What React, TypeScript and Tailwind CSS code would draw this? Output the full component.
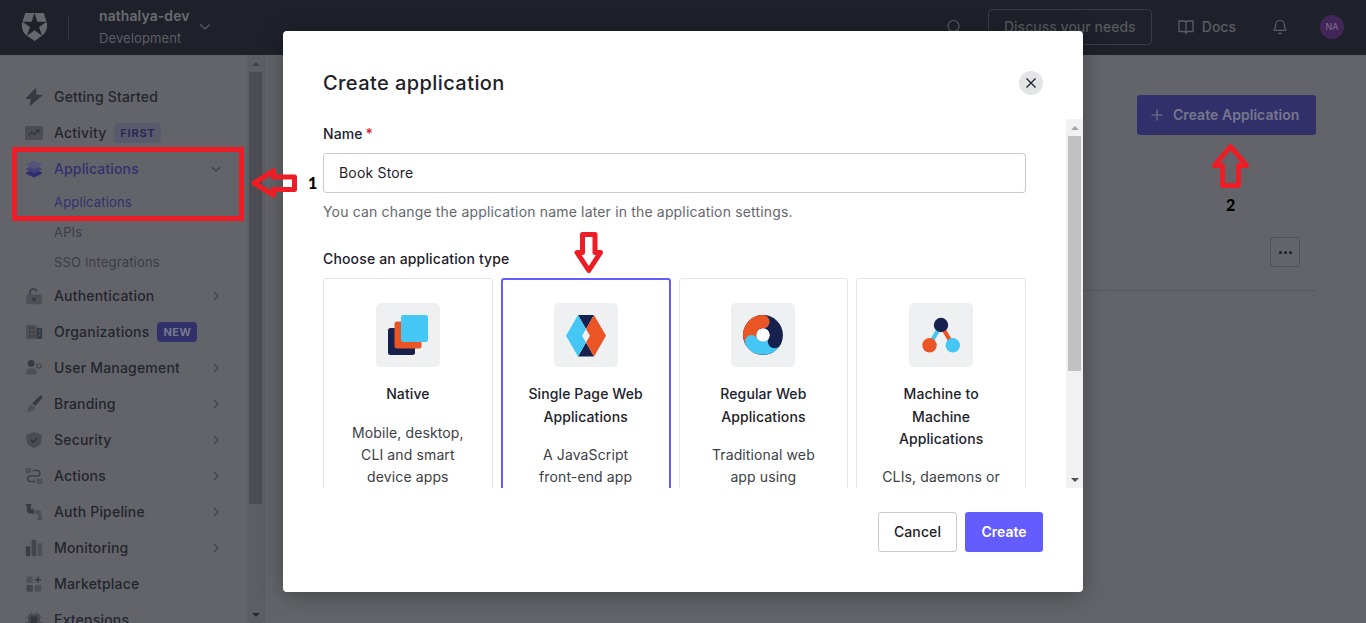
import React from "react";

const ICON_DARK = "#3f414c";
const ICON_LIGHT = "#4f5056";

const Svg = ({ children, size = 18 }: { children: React.ReactNode; size?: number }) => (
  <svg width={size} height={size} viewBox="0 0 18 18" fill="none">
    {children}
  </svg>
);

const icons: Record<string, React.ReactNode> = {
  bolt: (
    <Svg>
      <path d="M10.6.8 1.4 10.4h5l-.9 6.400L16.600 7.400h-5.700Z" fill="#373a45" stroke="#373a45" strokeWidth="1.200" strokeLinejoin="round" />
    </Svg>
  ),
  activity: (
    <Svg>
      <rect x="0" y="2" width="18" height="14" rx="1.4" fill="#4c4d53" />
      <path d="m3.6 11.3 3-3 2.6 2.2 4.3-4.2M10.6 6h3.3v3.2" stroke="#34363e" strokeWidth="1.3" />
    </Svg>
  ),
  layers: (
    <Svg>
      <path d="m9 9 8 3.500v1.200L9 17.400 1 13.700v-1.200Z" fill="#2f2b72" />
      <path d="m9 5 7.600 3.400v1.200L9 13.200 1.400 9.600V8.400Z" fill="#434178" />
      <path d="m9 .7 7.600 3.500v1.200L9 9 1.400 5.400V4.200Z" fill="#54547a" />
    </Svg>
  ),
  lock: (
    <Svg>
      <path d="M4.900 8.600V5.200A3.600 3.600 0 0 1 11.800 4.300" stroke={ICON_DARK} strokeWidth="2" />
      <rect x="1.2" y="7.6" width="15.6" height="9.6" rx="1.5" fill={ICON_LIGHT} />
      <circle cx="9" cy="12.5" r="2" fill="#393b43" />
    </Svg>
  ),
  building: (
    <Svg>
      <rect x="1" y="2" width="11" height="14" rx="1.2" fill={ICON_LIGHT} />
      <rect x="11.6" y="4.8" width="5.6" height="11.2" rx="1.2" fill="#373b46" />
      <path d="M4 4h1.5v1.8H4zM7.8 4h1.5v1.8H7.8zM4 8h1.5v1.8H4zM7.8 8h1.5v1.8H7.8zM4 12h1.5v1.8H4zM7.8 12h1.5v1.8H7.8z" fill="#33363e" />
      <path d="M14 7.6h1.3v1.6H14zM14 11.4h1.3V13H14z" fill="#5a5b61" />
    </Svg>
  ),
  users: (
    <Svg>
      <circle cx="6.2" cy="4.4" r="3.4" fill="#373a45" />
      <path d="M1 15.4v-2.2c0-2.4 1.5-3.6 3.8-3.6h2.8c2.4 0 3.8 1.2 3.8 3.6v2.2Z" fill={ICON_LIGHT} />
      <circle cx="14" cy="7" r="2" stroke="#494a50" strokeWidth="1.2" />
      <path d="M14 3.8v1.3M14 8.9v1.3M11.2 5.4l1.1.6M15.7 8l1.1.6M11.2 8.6l1.1-.6M15.7 6l1.1-.6" stroke="#494a50" strokeWidth="1.2" />
    </Svg>
  ),
  brush: (
    <Svg>
      <path d="M16.7.7c1 .8.5 1.9 0 2.7L10.4 11 7.2 8.4l6.7-6.6c.8-.7 1.9-1.7 2.8-1.1Z" fill="#373a45" />
      <path d="M6.3 9.3 9.6 12c.3 3.2-2.4 5.2-8.6 4.8 2-1.2 1.7-2.7 2.4-4.6.6-1.7 1.5-2.6 2.9-2.9Z" fill={ICON_LIGHT} />
    </Svg>
  ),
  shield: (
    <Svg>
      <path d="M9 1 16.6 3.6v5.2c0 4-2.8 6.7-7.6 8.6-4.8-1.9-7.6-4.6-7.6-8.6V3.6Z" fill="#4b4c52" />
      <path d="m5.8 8.8 2.3 2.3 4.2-4.2" stroke="#32343d" strokeWidth="1.5" />
    </Svg>
  ),
  flow: (
    <Svg>
      <rect x=".6" y="1" width="5.6" height="5.2" rx=".8" fill={ICON_LIGHT} />
      <rect x="11.6" y="11.8" width="5.6" height="5.2" rx=".8" fill={ICON_LIGHT} />
      <path d="M7.8 3.4h4.4a2.8 2.8 0 0 1 0 5.6H5.4a2.7 2.7 0 0 0 0 5.4h4.8" stroke="#3d3f48" strokeWidth="1.5" />
    </Svg>
  ),
  pipe: (
    <Svg>
      <path d="M.6 1h5.8v1.3H5.6v3c0 .7.3 1 1 1h1v-.8h1.2v5.8H7.6v-.8H6c-2.800 0-4.200-1.400-4.200-4.200v-4H.6Z" fill="#373a45" />
      <path d="M9.6 6.9h3.2c2.6 0 3.8 1.4 3.8 4v4.6h.8V17h-5.6v-1.5h.9V12c0-.7-.3-1-1-1H9.6Z" fill={ICON_LIGHT} />
    </Svg>
  ),
  bars: (
    <Svg>
      <rect x=".8" y="7.2" width="4.4" height="10" rx="1.2" fill="#3b3e48" />
      <rect x="6.6" y=".8" width="4.8" height="16.4" rx="1.4" fill="#44464e" />
      <rect x="12.8" y="4" width="4.4" height="13.2" rx="1.2" fill={ICON_LIGHT} />
    </Svg>
  ),
  market: (
    <Svg>
      <rect x="1.4" y="1.6" width="6.4" height="6.4" rx="1.3" fill={ICON_LIGHT} />
      <rect x="1.4" y="10" width="6.4" height="6.8" rx="1.3" fill="#43454c" />
      <rect x="9.8" y="10" width="6.6" height="6.8" rx="1.3" fill={ICON_LIGHT} />
      <path d="M13 1.6v6.2M9.9 4.7h6.2" stroke="#353841" strokeWidth="1.4" />
    </Svg>
  ),
  chip: (
    <Svg>
      <path d="M6.500.5v17M11.500.5v17M.6 6.500h17M.6 11.500h17" stroke={ICON_LIGHT} strokeWidth="1.4" />
      <rect x="3" y="3" width="12" height="12" rx="1.6" fill="#4a4b51" />
      <rect x="5.6" y="5.6" width="6.8" height="6.8" rx=".6" fill="#33363f" />
    </Svg>
  ),
};

type Item = { label: string; icon: string; badge?: "FIRST" | "NEW"; arrow?: boolean };

const lower: Item[] = [
  { label: "Authentication", icon: "lock", arrow: true },
  { label: "Organizations", icon: "building", badge: "NEW" },
  { label: "User Management", icon: "users", arrow: true },
  { label: "Branding", icon: "brush", arrow: true },
  { label: "Security", icon: "shield", arrow: true },
  { label: "Actions", icon: "flow", arrow: true },
  { label: "Auth Pipeline", icon: "pipe", arrow: true },
  { label: "Monitoring", icon: "bars", arrow: true },
  { label: "Marketplace", icon: "market" },
  { label: "Extensions", icon: "chip" },
];

const Chevron = ({ down = false }: { down?: boolean }) => (
  <svg width="10" height="10" viewBox="0 0 10 10" fill="none" stroke="#3d3f46" strokeWidth="1.1" className="ml-auto">
    <path d={down ? "M1 3l4 4 4-4" : "M3 1l4 4-4 4"} />
  </svg>
);

const NavRow = ({ item }: { item: Item }) => (
  <div className="flex h-9 shrink-0 items-center pr-[26px] pl-[25px]">
    {icons[item.icon]}
    <span className="ml-[11px] text-sm font-medium tracking-[0.19px] text-[#23252e]">{item.label}</span>
    {item.badge === "FIRST" && (
      <span className="ml-[8px] flex h-5 w-[47px] items-center justify-center rounded bg-[#595a6c] text-[11px] font-semibold tracking-[0.8px] text-[#272551]">
        FIRST
      </span>
    )}
    {item.badge === "NEW" && (
      <span className="ml-[8px] flex h-5 w-10 items-center justify-center rounded bg-[#32306a] text-[11px] font-bold tracking-[0.5px] text-[#77788a]">
        NEW
      </span>
    )}
    {item.arrow && <Chevron />}
  </div>
);

const Header = () => (
  <header className="flex h-[55px] shrink-0 items-center bg-[#1e212a] pb-[2px] text-[#64666c]">
    <svg width="29" height="28" viewBox="0 0 24 24" preserveAspectRatio="none" className="ml-5 mt-px">
      <path
        fill="#66686e"
        d="M21.98 7.448L19.62 0H4.347L2.02 7.448c-1.352 4.312.03 9.206 3.815 12.015L12.007 24l6.157-4.552c3.755-2.81 5.182-7.688 3.815-12.015l-6.16 4.58 2.343 7.45-6.157-4.597-6.158 4.58 2.358-7.433-6.188-4.55 7.63-.045L12.008 0l2.356 7.404 7.615.044z"
      />
    </svg>
    <div className="ml-[19px] h-6 w-px bg-[#34373f]" />
    <div className="ml-[30px] flex w-[91px] flex-col text-sm leading-[22px]">
      <span className="font-semibold tracking-[0.08px] text-[#696b70]">nathalya-dev</span>
      <span className="text-[13px] tracking-[0.12px] text-[#5c5e64]">Development</span>
    </div>
    <svg width="12" height="8" viewBox="0 0 12 8" fill="none" stroke="#5c5e64" strokeWidth="1.2" className="ml-[9px]">
      <path d="m1.300 1.500 4.700 4.500 4.700-4.500" />
    </svg>
    <div className="ml-auto flex items-center pr-[22px]">
      <svg width="16" height="16" viewBox="0 0 16 16" fill="none" stroke="#5c5e64" strokeWidth="1.200">
        <circle cx="7.500" cy="7" r="5.500" />
        <path d="m11.500 11 3 3" />
      </svg>
      <div className="ml-[26px] flex h-9 w-[164px] items-center justify-center rounded border border-[#393c44] text-sm font-medium tracking-[0.02px] text-[#55575e]">
        Discuss your needs
      </div>
      <svg width="16" height="16" viewBox="0 0 16 16" fill="none" stroke="#5c5e64" strokeWidth="1.300" className="ml-[26px]">
        <path d="M8 3c-.6-.8-1.500-1-2.500-1H1v10.500h5c1 0 1.700.4 2 1.500.3-1.100 1-1.500 2-1.500h5V2h-4.500C9.500 2 8.600 2.200 8 3Zm0 0v10.500" />
      </svg>
      <span className="ml-[8px] text-sm font-medium text-[#5c5e64]">Docs</span>
      <svg width="16" height="18" viewBox="0 0 16 18" fill="none" stroke="#5c5e64" strokeWidth="1.200" className="ml-[36px]">
        <path d="M2 12.300c1.200-1.500 1.500-2.800 1.500-5.300a4.500 4.500 0 0 1 9 0c0 2.500.3 3.800 1.500 5.300ZM6.300 15.300h3.400" strokeLinejoin="round" />
      </svg>
      <div className="ml-[32px] flex h-6 w-6 items-center justify-center rounded-full bg-[#42265a] text-[9px] text-[#81728b]">NA</div>
    </div>
  </header>
);

const Sidebar = () => (
  <aside className="flex w-[265px] shrink-0 border-r border-[#5b5c61]">
    <nav className="flex h-[568px] w-[247px] flex-col overflow-hidden pt-6">
      <NavRow item={{ label: "Getting Started", icon: "bolt" }} />
      <NavRow item={{ label: "Activity", icon: "activity", badge: "FIRST" }} />
      <div className="flex h-9 shrink-0 items-center pr-[26px] pl-[25px]">
        {icons.layers}
        <span className="ml-[11px] text-sm font-medium tracking-[0.14px] text-[#33306f]">Applications</span>
        <Chevron down />
      </div>
      <div className="flex h-[91px] shrink-0 flex-col pt-[1px] pl-[54px] text-[13px] tracking-[0.17px] text-[#3b3d44]">
        <span className="flex h-[30px] items-center text-[#33306f]">Applications</span>
        <span className="flex h-[31px] items-center">APIs</span>
        <span className="flex h-[31px] items-center">SSO Integrations</span>
      </div>
      {lower.map((item) => (
        <NavRow key={item.label} item={item} />
      ))}
    </nav>
    <div className="flex w-[17px] flex-col items-center bg-[#5d5e63]">
      <div className="flex h-[17px] items-center">
        <svg width="8" height="4" viewBox="0 0 8 4"><path d="M0 4 4 0l4 4Z" fill="#414247" /></svg>
      </div>
      <div className="h-[432px] w-[13px] bg-[#4c4d52]" />
      <div className="mt-auto flex h-[17px] items-center">
        <svg width="8" height="4" viewBox="0 0 8 4"><path d="m0 0 4 4 4-4Z" fill="#26272c" /></svg>
      </div>
    </div>
  </aside>
);

const Content = () => (
  <main className="flex flex-1 flex-col pr-[50px] pl-[50px]">
    <div className="mt-10 flex h-10 w-[179px] items-center self-end rounded-[3px] bg-[#32306a] pl-[14px] text-[#76778c]">
      <svg width="12" height="12" viewBox="0 0 12 12" stroke="#76778c" strokeWidth="1.200"><path d="M6 .5v11M.5 6h11" /></svg>
      <span className="ml-[10px] text-sm font-semibold tracking-[0.04px]">Create Application</span>
    </div>
    <div className="mt-[86px] flex h-[70px] justify-end border-b border-[#57585e] pt-4 pr-4">
      <div className="flex h-[30px] w-[30px] items-center justify-center gap-[2px] rounded-[3px] border border-[#505157]">
        <i className="h-[3px] w-[3px] rounded-full bg-[#1f2129]" />
        <i className="h-[3px] w-[3px] rounded-full bg-[#1f2129]" />
        <i className="h-[3px] w-[3px] rounded-full bg-[#1f2129]" />
      </div>
    </div>
  </main>
);

const NAVY = "#16214d";
const ORANGE = "#eb5424";
const SKY = "#44c7f4";

const appTypes = [
  {
    title: ["Native"],
    text: ["Mobile, desktop,", "CLI and smart", "device apps"],
    art: (
      <>
        <rect x="12" y="25" width="27" height="27" rx="2.500" fill={NAVY} />
        <rect x="18.500" y="18.500" width="27" height="27" rx="2.500" fill={ORANGE} />
        <rect x="25" y="12" width="27" height="27" rx="2.500" fill={SKY} />
      </>
    ),
  },
  {
    title: ["Single Page Web", "Applications"],
    text: ["A JavaScript", "front-end app"],
    selected: true,
    art: (
      <>
        <path d="M24 12h16l-8 14ZM24 53.500h16l-8-14Z" fill={NAVY} />
        <path d="M24 12 12 32.700l12 20.800 8-14-4-6.800 4-6.700Z" fill={SKY} />
        <path d="m40 12 12 20.700-12 20.800-8-14 4-6.800-4-6.700Z" fill={ORANGE} />
      </>
    ),
  },
  {
    title: ["Regular Web", "Applications"],
    text: ["Traditional web", "app using"],
    art: (
      <>
        <circle cx="32" cy="32" r="13.300" fill="none" stroke={NAVY} strokeWidth="13.300" />
        <path d="M43.500 38.600A13.300 13.300 0 0 1 20.500 38.600" fill="none" stroke={SKY} strokeWidth="13.300" />
        <circle cx="43.500" cy="38.600" r="6.650" fill={NAVY} />
        <path d="M20.500 38.600A13.300 13.300 0 0 1 32 18.700" fill="none" stroke={ORANGE} strokeWidth="13.300" />
        <circle cx="32" cy="18.700" r="6.650" fill={ORANGE} />
        <circle cx="20.500" cy="38.600" r="6.650" fill={SKY} />
        <circle cx="32" cy="32" r="6.600" fill="#fff" />
      </>
    ),
  },
  {
    title: ["Machine to", "Machine", "Applications"],
    text: ["CLIs, daemons or"],
    art: (
      <>
        <path d="M32 22 20.500 42" stroke={SKY} strokeWidth="4.200" />
        <path d="M32 22 43.700 42" stroke={ORANGE} strokeWidth="4.200" />
        <circle cx="32" cy="22" r="7.200" fill={NAVY} />
        <circle cx="20.500" cy="42.300" r="7.200" fill={ORANGE} />
        <circle cx="43.800" cy="42.300" r="7.200" fill={SKY} />
      </>
    ),
  },
];

const Modal = () => (
  <section className="absolute top-[31px] left-[283px] flex h-[561px] w-[800px] flex-col rounded-[4px] bg-white text-[#1e212a] shadow-[0_4px_22px_rgba(0,0,0,0.3)]">
    <div className="flex h-[88px] shrink-0 items-center justify-between px-10 pt-4">
      <h1 className="text-xl font-medium tracking-[0.42px]">Create application</h1>
      <div className="flex h-6 w-6 items-center justify-center rounded-full bg-[#e3e4e6]">
        <svg width="12" height="12" viewBox="0 0 12 12" stroke="#1e212a" strokeWidth="1.300"><path d="m1.500 1.500 9 9M10.500 1.500l-9 9" /></svg>
      </div>
    </div>
    <div className="flex h-[369px] shrink-0 overflow-hidden">
      <div className="flex w-[783px] flex-col pl-10 pr-10">
        <div className="mt-1 text-sm leading-[22px] font-medium tracking-[0.1px]">
          Name <span className="-ml-px text-[#d0202c]">*</span>
        </div>
        <div className="mt-2 flex h-10 w-[703px] shrink-0 items-center rounded-[3px] border border-[#c9cace] px-[15px] text-sm tracking-[0.18px]">Book Store</div>
        <p className="mt-2 text-sm leading-[22px] tracking-[0.165px] text-[#65676e]">You can change the application name later in the application settings.</p>
        <div className="mt-[25px] text-sm leading-[22px] font-medium tracking-[0.15px]">Choose an application type</div>
        <div className="mt-2 grid w-[703px] shrink-0 grid-cols-4 gap-2">
          {appTypes.map((t) => (
            <div
              key={t.title.join(" ")}
              className={
                t.selected
                  ? "flex h-[260px] flex-col items-center rounded-[3px] border-2 border-[#635dff] pt-[23px]"
                  : "flex h-[260px] flex-col items-center rounded-[3px] border border-[#e3e4e6] pt-6"
              }
            >
              <svg width="64" height="64" viewBox="0 0 64 64" className="shrink-0 rounded-[5px] bg-[#eff0f2]">{t.art}</svg>
              <div className="mt-[16.200px] text-center text-sm leading-[22.400px] font-medium tracking-[0.1px]">
                {t.title.map((l) => <div key={l}>{l}</div>)}
              </div>
              <div className="mt-4 text-center text-sm leading-[22px] tracking-[0.12px] text-[#3c3e46]">
                {t.text.map((l) => <div key={l}>{l}</div>)}
              </div>
            </div>
          ))}
        </div>
      </div>
      <div className="flex h-[369px] w-[17px] flex-col items-center bg-[#f1f1f1]">
        <div className="flex h-[17px] items-center">
          <svg width="8" height="4" viewBox="0 0 8 4"><path d="M0 4 4 0l4 4Z" fill="#a3a3a3" /></svg>
        </div>
        <div className="h-[235px] w-[13px] bg-[#c1c1c1]" />
        <div className="mt-auto flex h-[17px] items-center">
          <svg width="8" height="4" viewBox="0 0 8 4"><path d="m0 0 4 4 4-4Z" fill="#505050" /></svg>
        </div>
      </div>
    </div>
    <div className="flex justify-end gap-2 pt-6 pr-10 text-sm">
      <button className="h-10 w-[79px] rounded-[3px] border border-[#c9cace] font-medium tracking-[0.1px]">Cancel</button>
      <button className="h-10 w-[78px] rounded-[3px] bg-[#635dff] font-semibold text-white">Create</button>
    </div>
  </section>
);

const Annotations = () => (
  <>
    <div className="absolute top-[147px] left-3 h-[74px] w-[232px] border-[5px] border-[#ee1c24]" />
    <svg width="48" height="32" viewBox="0 0 48 32" className="absolute top-[167px] left-[250px]" fill="none" stroke="#ee1c24" strokeWidth="5" strokeLinejoin="round">
      <path d="M4 16 23.500 4v6H44.500v12.500H23.500v5.500Z" />
    </svg>
    <span className="absolute top-[172px] left-[308px] font-['Lato',sans-serif] text-base leading-[22px] font-black text-black">1</span>
    <svg width="30" height="44" viewBox="0 0 30 44" className="absolute top-[231px] left-[574px]" fill="none" stroke="#ee1c24" strokeWidth="5" strokeLinejoin="round">
      <path d="M8.500 3.500h12.500v18h5.500L14.800 39.500 3 21.500h5.500Z" />
    </svg>
    <svg width="40" height="48" viewBox="0 0 40 48" className="absolute top-[142px] left-[1210px]" fill="none" stroke="#ee1c24" strokeWidth="5" strokeLinejoin="round">
      <path d="M20.500 4.500 36.500 23.500h-8V43.500h-16v-20h-8Z" />
    </svg>
    <span className="absolute top-[194px] left-[1226px] font-['Lato',sans-serif] text-base leading-[22px] font-black text-black">2</span>
  </>
);

export default function App() {
  return (
    <div className="relative flex h-[623px] w-[1366px] flex-col overflow-hidden bg-[#636469] font-['Inter',sans-serif]">
      <Header />
      <div className="flex min-h-0 flex-1">
        <Sidebar />
        <Content />
      </div>
      <Modal />
      <Annotations />
    </div>
  );
}
